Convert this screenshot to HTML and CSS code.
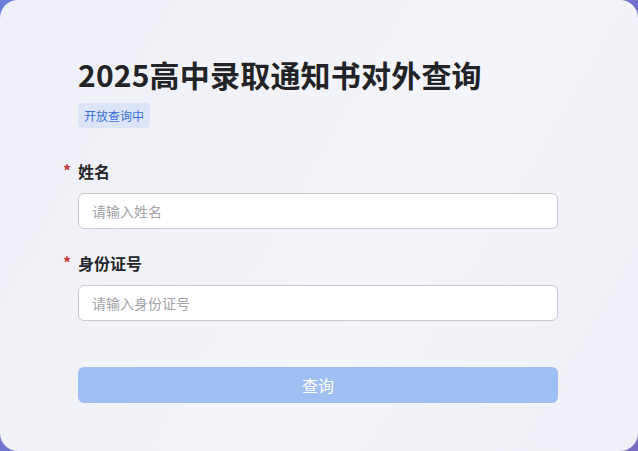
FILE: index.html
```html
<!DOCTYPE html>
<html lang="zh-CN">
<head>
    <meta charset="UTF-8">
    <title>2025高中录取通知书对外查询</title>
    <link rel="stylesheet" href="styles.css">
</head>
<body>
    <div class="card">
        <h1 class="title">2025高中录取通知书对外查询</h1>
        <span class="tag">开放查询中</span>

        <form class="form" onsubmit="return false;">
            <div class="field">
                <label class="label" for="name"><span class="req">*</span>姓名</label>
                <input class="input" type="text" id="name" placeholder="请输入姓名">
            </div>
            <div class="field">
                <label class="label" for="idcard"><span class="req">*</span>身份证号</label>
                <input class="input" type="text" id="idcard" placeholder="请输入身份证号">
            </div>
            <button class="btn" type="submit" disabled>查询</button>
        </form>
    </div>
</body>
</html>
```
FILE: styles.css
```css
html, body {
    margin: 0;
    height: 100%;
}
body {
    background: linear-gradient(135deg, #6b7fd6, #7a6bc0);
    font-family: "Noto Sans CJK SC", "Noto Sans", sans-serif;
}
.card {
    box-sizing: border-box;
    height: 451px;
    background: linear-gradient(120deg, #eff0f7, #f4f5fa 60%, #eff0f7);
    border-radius: 18px;
    padding: 52px 80px 0 78px;
}
.title {
    margin: 0;
    font-size: 30px;
    line-height: 44px;
    font-weight: 700;
    color: #222326;
    letter-spacing: 0.2px;
}
.tag {
    display: inline-block;
    margin-top: 7px;
    padding: 0 6px;
    height: 25px;
    line-height: 25px;
    font-size: 12px;
    color: #3a6fd6;
    background: #dbe5f7;
    border-radius: 4px;
}
.form {
    margin-top: 32px;
}
.field {
    margin-bottom: 23px;
}
.label {
    display: block;
    position: relative;
    font-size: 16px;
    font-weight: 700;
    line-height: 22px;
    color: #25262a;
    margin-bottom: 11px;
}
.req {
    position: absolute;
    left: -15px;
    top: -1px;
    color: #c43a3a;
    font-size: 16px;
}
.input {
    box-sizing: border-box;
    display: block;
    width: 100%;
    height: 36px;
    padding: 0 13px;
    font-family: inherit;
    font-size: 14px;
    color: #333;
    background: #fff;
    border: 1px solid #c9cacf;
    border-radius: 6px;
    outline: none;
}
.input::placeholder {
    color: #a3a3a8;
}
.btn {
    display: block;
    width: 100%;
    height: 36px;
    margin-top: 46px;
    font-family: inherit;
    font-size: 16px;
    color: #fff;
    background: #9fbef1;
    border: none;
    border-radius: 6px;
}
```
